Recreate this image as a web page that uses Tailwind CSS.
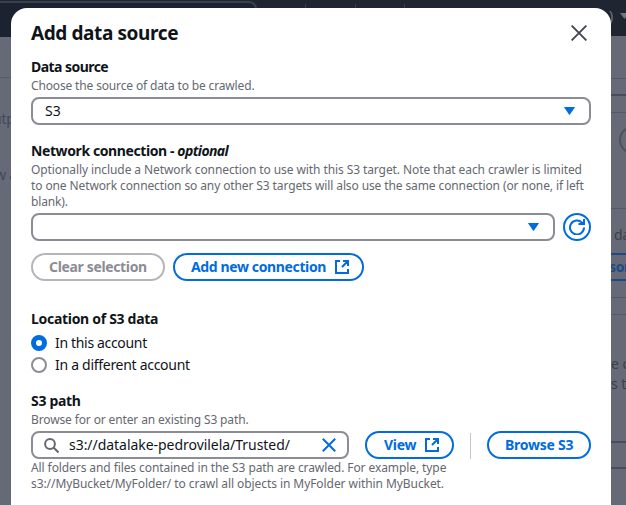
<!DOCTYPE html>
<html lang="en">
<head>
<meta charset="utf-8">
<title>Add data source</title>
<script src="https://cdn.jsdelivr.net/npm/@tailwindcss/browser@4"></script>
</head>
<body class="relative h-[505px] w-[626px] overflow-hidden bg-[#656a76] font-['Noto_Sans',sans-serif] text-sm leading-5 text-[#0f141a]">

<!-- Dimmed page behind the dialog -->
<div class="h-[505px] w-[626px] overflow-hidden" aria-hidden="true">
  <header class="relative h-[36px] bg-[#1f2632]">
    <div class="flex h-[29px] items-start">
      <div class="mt-px h-9 w-[257px] shrink-0 rounded-tr-lg border-t-2 border-r-2 border-[#3a404c] bg-[#1b2230]"></div>
      <div class="mt-1 ml-12 h-6 w-px shrink-0 bg-[#3a404c]"></div>
      <div class="mt-1 ml-[49px] h-6 w-px shrink-0 bg-[#3a404c]"></div>
      <div class="mt-1 ml-12 h-6 w-px shrink-0 bg-[#3a404c]"></div>
      <div class="mt-[6px] ml-[204px] w-[11px] shrink-0 text-sm text-[#71757d]">)</div>
      <svg class="mt-[13px] ml-0 h-[6px] w-[9px] shrink-0" viewBox="0 0 9 6" fill="#71757d"><path d="M0 0h9L4.5 6z"/></svg>
    </div>
    <div class="h-[2px] w-[11px] bg-[#343a46]"></div>
  </header>
  <div class="flex justify-between">
    <div class="w-[11px] shrink-0 overflow-hidden text-[#41495a]">
      <div class="h-[42px] border-b border-[#555b67]"></div>
      <div class="mt-[31px] -ml-[7px] w-8 tracking-[-0.2px] whitespace-nowrap">utput</div>
      <div class="mt-[36px] -ml-[5px] w-8 tracking-[-0.2px] whitespace-nowrap">w a</div>
    </div>
    <div class="w-[15px] shrink-0 overflow-hidden text-[#3a404c]">
      <div class="h-[43px] border-b border-[#535965]"></div>
      <div class="h-[17px] border-b-2 border-[#474d5a]"></div>
      <div class="h-[17px] border-b border-[#535965]"></div>
      <div class="mt-[13px] ml-2 h-[28px] w-10 rounded-full border-2 border-[#4c525e]"></div>
      <div class="h-[55px] border-b border-[#535965]"></div>
      <div class="mt-4 h-5 pl-[3px] whitespace-nowrap">data</div>
      <div class="mt-2 h-[28px] w-12 border-y-2 border-[#1d4a86] text-sm leading-6 font-bold text-[#1d4a86]"><span class="-ml-[2px] tracking-[-0.4px]">sor</span></div>
      <div class="h-[17px] border-b border-[#535965]"></div>
      <div class="h-[17px] border-b border-[#535965]"></div>
      <div class="mt-[39px] leading-5 whitespace-nowrap">e of</div>
      <div class="leading-5 whitespace-nowrap">s to</div>
      <div class="mt-[47px] h-[28px] border-y-2 border-[#474d5a]"></div>
    </div>
  </div>
</div>

<!-- Dialog -->
<main class="absolute top-2 left-[11px] h-[520px] w-[600px] rounded-t-2xl bg-white px-5">
  <div class="flex h-[49px] items-start justify-between">
    <h1 class="mt-[13px] text-[19px] leading-6 font-bold tracking-[-0.4px] whitespace-nowrap">Add data source</h1>
    <button aria-label="Close" class="mt-[17px] mr-1"><svg class="size-4" viewBox="0 0 16 16" fill="none" stroke="#424650" stroke-width="1.9"><path d="M.6.6l14.8 14.8M15.4.6L.6 15.4"/></svg></button>
  </div>

  <section>
    <h2 class="h-5 font-bold tracking-[-0.55px]">Data source</h2>
    <p class="h-4 pt-px text-xs leading-4 tracking-[-0.15px] text-[#656871]">Choose the source of data to be crawled.</p>
    <div class="mt-1 flex h-7 items-center justify-between rounded-lg border-2 border-[#8c8c94] pr-[14px] pl-3">
      <span>S3</span>
      <svg class="h-2 w-[11px]" viewBox="0 0 11 8" fill="#006ce0"><path d="M.6 0h9.8q.6 0 .4.6L6 7.6q-.5.5-1 0L.2.6Q0 0 .6 0z"/></svg>
    </div>
  </section>

  <section class="mt-4">
    <h2 class="h-5 font-bold whitespace-nowrap"><span class="tracking-[-0.4px]">Network connection - </span><i class="tracking-[-0.6px]">optional</i></h2>
    <div class="h-12 pt-px text-xs leading-4 whitespace-nowrap text-[#656871]">
      <p class="tracking-[-0.09px]">Optionally include a Network connection to use with this S3 target. Note that each crawler is limited</p>
      <p class="tracking-[-0.11px]">to one Network connection so any other S3 targets will also use the same connection (or none, if left</p>
      <p class="tracking-[-0.15px]">blank).</p>
    </div>
    <div class="mt-1 flex gap-2">
      <div class="flex h-7 flex-1 items-center justify-end rounded-lg border-2 border-[#8c8c94] pr-[14px]">
        <svg class="h-2 w-[11px]" viewBox="0 0 11 8" fill="#006ce0"><path d="M.6 0h9.8q.6 0 .4.6L6 7.6q-.5.5-1 0L.2.6Q0 0 .6 0z"/></svg>
      </div>
      <button aria-label="Refresh" class="flex size-7 items-center justify-center rounded-full border-2 border-[#006ce0]">
        <svg class="size-4" viewBox="0 0 16 16" fill="none" stroke="#006ce0" stroke-width="2"><path d="M15 8.5A7 7 0 1 1 13 3.6L14.4 5"/><path d="M9.5 5H15V0"/></svg>
      </button>
    </div>
    <div class="mt-3 flex gap-2 font-bold">
      <button class="h-7 w-[134px] rounded-full border-2 border-[#b4b4bb] pl-4 text-left whitespace-nowrap text-[#8c8c94]"><span class="block leading-6 tracking-[-0.35px]">Clear selection</span></button>
      <button class="flex h-7 w-[191px] items-center justify-between rounded-full border-2 border-[#006ce0] pr-[13px] pl-4 whitespace-nowrap text-[#006ce0]"><span class="tracking-[-0.37px]">Add new connection</span>
        <svg class="size-[14px]" viewBox="0 0 14 14" fill="none" stroke="#006ce0" stroke-width="2"><path d="M5 1H1v12h12V9M8 1h5v5M13 1L7 7"/></svg>
      </button>
    </div>
  </section>

  <section class="mt-7">
    <h2 class="h-5 font-bold tracking-[-0.3px]">Location of S3 data</h2>
    <label class="mt-1 flex h-5 items-center gap-2"><span class="size-4 rounded-full border-5 border-[#006ce0] bg-white"></span><span class="tracking-[-0.33px]">In this account</span></label>
    <label class="mt-[2px] flex h-5 items-center gap-2"><span class="size-4 rounded-full border-2 border-[#8c8c94]"></span><span class="tracking-[-0.29px]">In a different account</span></label>
  </section>

  <section class="mt-4">
    <h2 class="h-5 font-bold tracking-[-0.3px]">S3 path</h2>
    <p class="h-4 pt-px text-xs leading-4 tracking-[-0.13px] text-[#656871]">Browse for or enter an existing S3 path.</p>
    <div class="mt-1 flex h-7 font-bold text-[#006ce0]">
      <div class="flex w-[318px] items-center rounded-lg border-2 border-[#8c8c94] pr-[11px] pl-[11px] font-normal text-[#0f141a]">
        <svg class="size-[15px]" viewBox="0 0 15 15" fill="none" stroke="#656871" stroke-width="2"><circle cx="6" cy="6" r="4.9"/><path d="M9.5 9.5l5 5"/></svg>
        <span class="ml-[10px] flex-1 tracking-[-0.04px] whitespace-nowrap">s3://datalake-pedrovilela/Trusted/</span>
        <svg class="size-[14px]" viewBox="0 0 14 14" fill="none" stroke="#006ce0" stroke-width="2"><path d="M.8.8l12.4 12.4M13.2.8L.8 13.2"/></svg>
      </div>
      <button class="ml-4 flex w-[89px] items-center justify-between rounded-full border-2 border-[#006ce0] pr-[13px] pl-[17px]"><span class="tracking-[-0.3px]">View</span>
        <svg class="size-[14px]" viewBox="0 0 14 14" fill="none" stroke="#006ce0" stroke-width="2"><path d="M5 1H1v12h12V9M8 1h5v5M13 1L7 7"/></svg>
      </button>
      <div class="mt-[2px] ml-4 h-[26px] w-px bg-[#c6c6cd]"></div>
      <button class="ml-4 flex w-[104px] items-center rounded-full border-2 border-[#006ce0] pl-4 whitespace-nowrap"><span class="tracking-[-0.25px]">Browse S3</span></button>
    </div>
    <div class="pt-px text-xs leading-4 whitespace-nowrap text-[#656871]">
      <p class="tracking-[-0.09px]">All folders and files contained in the S3 path are crawled. For example, type</p>
      <p class="tracking-[-0.07px]">s3://MyBucket/MyFolder/ to crawl all objects in MyFolder within MyBucket.</p>
    </div>
  </section>
</main>
</body>
</html>
